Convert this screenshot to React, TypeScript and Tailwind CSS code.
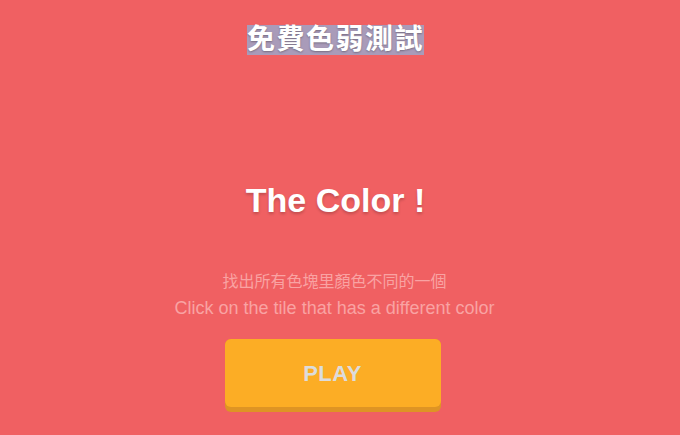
import React from "react";

export default function App() {
  return (
    <div className="w-[680px] h-[435px] overflow-hidden bg-[#f06062]">
      <div className="w-[665px] flex flex-col items-center" style={{ fontFamily: '"Liberation Sans", "Noto Sans CJK TC", sans-serif' }}>
        <div className="mt-[25px] ml-[6px] h-[30px] flex items-center bg-[#a99bb9]">
          <span className="text-[28px] leading-[30px] font-bold text-white tracking-[1.5px] [text-shadow:0_1px_2px_rgba(0,0,0,0.3)]">免費色弱測試</span>
        </div>
        <div className="mt-[125px] ml-[6px] text-[34px] leading-[40px] font-bold text-white [text-shadow:0_2px_3px_rgba(0,0,0,0.2)]">The Color !</div>
        <div className="mt-[49px] ml-[4px] leading-[26px] text-[#f9a3a3] text-center">
          <div className="text-[16px]">找出所有色塊里顏色不同的一個</div>
          <div className="text-[18px]">Click on the tile that has a different color</div>
        </div>
        <div className="mt-[18px] w-[216px] h-[73px] rounded-[6px] bg-[#de9424]">
          <div className="h-[68px] rounded-[6px] bg-[#fcad25] flex items-center justify-center">
            <span className="text-[22px] font-bold text-[#dcdcdc] tracking-[0.5px]">PLAY</span>
          </div>
        </div>
      </div>
    </div>
  );
}
